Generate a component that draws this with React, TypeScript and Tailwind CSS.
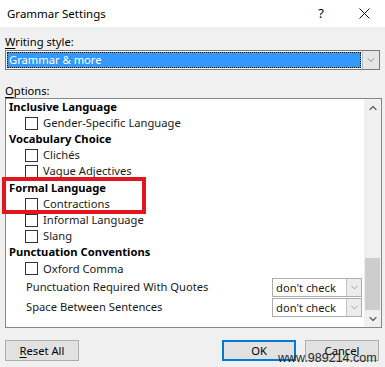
import { ChevronDown, ChevronUp } from "lucide-react";

const font = { fontFamily: '"Segoe UI", "Noto Sans", Arial, sans-serif' };

const Heading = ({ children }: { children: string }) => (
  <div className="h-[16.2px] flex items-center pl-[3px] font-bold text-black">{children}</div>
);

const CheckRow = ({ label }: { label: string }) => (
  <div className="h-[16.2px] flex items-center pl-[19px]">
    <span className="w-[13px] h-[13px] border border-[#333333] bg-white shrink-0" />
    <span className="ml-[5px] text-[#1a1a1a]">{label}</span>
  </div>
);

const SelectRow = ({ label }: { label: string }) => (
  <div className="h-[20.5px] flex items-center pl-[20px] pr-[2px] justify-between">
    <span className="text-[#1a1a1a]">{label}</span>
    <div className="w-[90px] h-[19px] border border-[#adadad] bg-white flex">
      <span className="flex-1 pl-[3px] leading-[17px] text-[#1a1a1a]">don't check</span>
      <span className="w-[15px] border-l border-[#c4c4c4] bg-[#ececec] flex items-center justify-center">
        <ChevronDown size={11} strokeWidth={1.2} className="text-[#606060]" />
      </span>
    </div>
  </div>
);

export default function App() {
  return (
    <div className="w-[385px] h-[367px] bg-[#f0f0f0] relative overflow-hidden text-[11.2px]" style={font}>
      {/* Title bar */}
      <div className="h-[27px] bg-white flex items-center pl-[7px]">
        <span className="text-[11.5px] text-black">Grammar Settings</span>
        <span className="ml-auto mr-[35px] text-[13px] text-black">?</span>
        <svg width="11" height="11" viewBox="0 0 11 11" className="mr-[15px]">
          <path d="M0.5 0.5 L10.5 10.5 M10.5 0.5 L0.5 10.5" stroke="#111" strokeWidth="1" />
        </svg>
      </div>

      <div className="px-[5px]">
        <div className="mt-[6px] h-[17px] leading-[17px] text-black">
          <span className="underline underline-offset-2">W</span>riting style:
        </div>

        {/* Writing style select */}
        <div className="h-[20px] border border-[#7a7a7a] bg-white flex">
          <div className="flex-1 p-[1px]">
            <div className="h-full bg-[#3399ff] border border-dotted border-[#1a1a1a] text-white leading-[14px] pl-[1px]">
              Grammar &amp; more
            </div>
          </div>
          <div className="w-[17px] bg-[#e5e5e5] border-l border-[#c0c0c0] flex items-center justify-center">
            <ChevronDown size={12} strokeWidth={1.2} className="text-[#505050]" />
          </div>
        </div>

        <div className="mt-[13px] h-[15px] leading-[15px] text-black">
          <span className="underline underline-offset-2">O</span>ptions:
        </div>

        {/* Options list */}
        <div className="w-[377px] h-[230px] border border-[#828790] bg-white flex">
          <div className="flex-1">
            <Heading>Inclusive Language</Heading>
            <CheckRow label="Gender-Specific Language" />
            <Heading>Vocabulary Choice</Heading>
            <CheckRow label="Clichés" />
            <CheckRow label="Vague Adjectives" />
            <Heading>Formal Language</Heading>
            <CheckRow label="Contractions" />
            <CheckRow label="Informal Language" />
            <CheckRow label="Slang" />
            <Heading>Punctuation Conventions</Heading>
            <CheckRow label="Oxford Comma" />
            <SelectRow label="Punctuation Required With Quotes" />
            <SelectRow label="Space Between Sentences" />
          </div>
          <div className="w-[17px] bg-[#f0f0f0] flex flex-col items-center">
            <div className="h-[17px] flex items-center justify-center">
              <ChevronUp size={12} strokeWidth={2.5} className="text-[#606060]" />
            </div>
            <div className="flex-1 w-full flex flex-col justify-end">
              <div className="h-[52px] mx-[1px] bg-[#cdcdcd]" />
            </div>
            <div className="h-[17px] flex items-center justify-center">
              <ChevronDown size={12} strokeWidth={2.5} className="text-[#606060]" />
            </div>
          </div>
        </div>

        {/* Buttons */}
        <div className="mt-[12px] flex items-center">
          <button className="w-[74px] h-[21px] bg-[#e1e1e1] border border-[#adadad] text-black leading-[19px]">
            <span className="underline underline-offset-2">R</span>eset All
          </button>
          <button className="ml-auto w-[74px] h-[21px] bg-[#e1e1e1] border-2 border-[#0078d7] text-black leading-[17px]">
            OK
          </button>
          <button className="ml-[9px] mr-[1px] w-[74px] h-[21px] bg-[#e1e1e1] border border-[#adadad] text-black leading-[19px]">
            Cancel
          </button>
        </div>
      </div>

      {/* Red highlight box */}
      <div className="absolute left-[2px] top-[177px] w-[144px] h-[37px] border-4 border-[#e3161f] pointer-events-none" />

      {/* Watermark */}
      <div
        className="absolute left-[278px] top-[351px] text-[12.5px] leading-[14px] text-[#2a2a2a]"
        style={{ fontFamily: '"Liberation Sans", Arial, sans-serif' }}
      >
        www.989214.com
      </div>
    </div>
  );
}
